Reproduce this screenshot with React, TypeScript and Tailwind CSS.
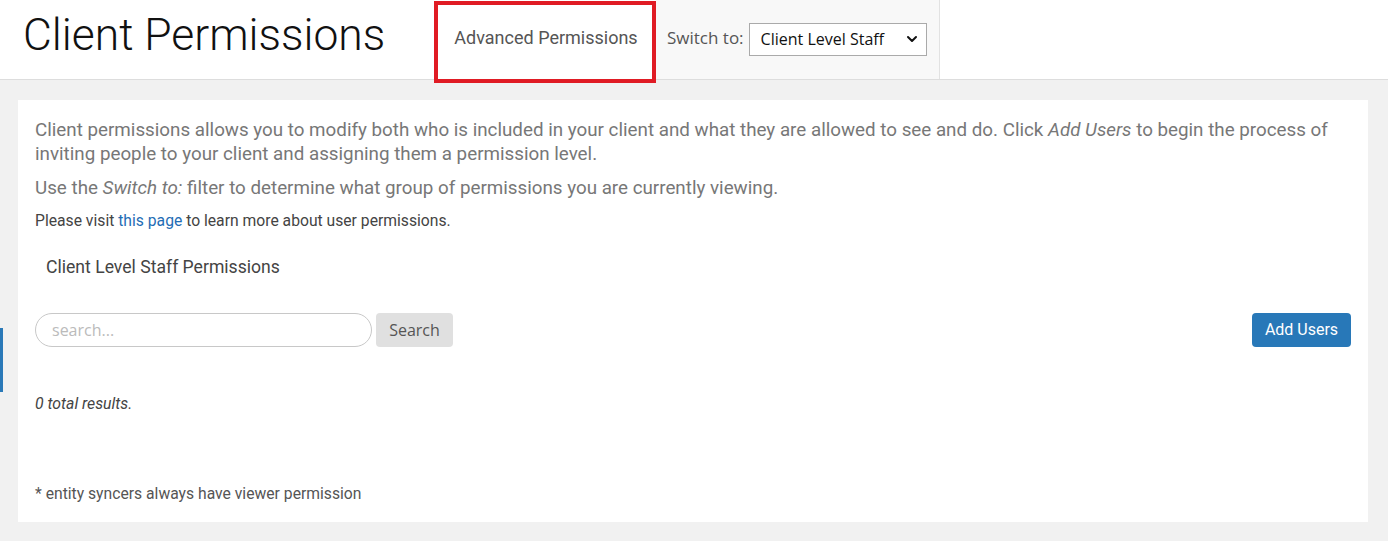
import React from "react";

export default function App() {
  return (
    <div className="w-[1388px] h-[541px] bg-[#f1f1f1] overflow-hidden relative" style={{ fontFamily: "Roboto, 'Liberation Sans', sans-serif" }}>
      {/* Header */}
      <div className="h-[80px] bg-white border-b border-[#dddddd] flex items-stretch">
        <div className="w-[434px] flex items-center pl-[23px]">
          <h1 className="text-[44.4px] font-light text-[#111] leading-none -mt-[8px]">Client Permissions</h1>
        </div>
        <div className="relative w-[222px] flex items-center justify-center bg-white">
          <span className="text-[18px] text-[#555] -mt-[4px] ml-[2px]">Advanced Permissions</span>
          <div className="absolute left-0 top-[1px] w-[222px] h-[82px] border-[4px] border-[#e01b24]" />
        </div>
        <div className="w-[284px] bg-[#f8f8f8] border-r border-[#e2e2e2] flex items-center pl-[11px] gap-[5px]">
          <span className="text-[17px] text-[#555] -mt-[4px]" style={{ fontFamily: "'Open Sans', sans-serif" }}>Switch to:</span>
          <div className="w-[178px] h-[33px] -mt-[1px] bg-white border border-[#aaaaaa] flex items-center justify-between pl-[11px] pr-[8px]">
            <span className="text-[16px] text-[#111]" style={{ fontFamily: "'Open Sans', sans-serif" }}>Client Level Staff</span>
            <svg width="12" height="12" viewBox="0 0 12 12" fill="none">
              <path d="M2 4l4 4 4-4" stroke="#111" strokeWidth="2" strokeLinecap="round" strokeLinejoin="round" />
            </svg>
          </div>
        </div>
        <div className="flex-1" />
      </div>

      {/* Left blue tab */}
      <div className="absolute left-0 top-[328px] w-[3px] h-[64px] bg-[#2a79b8]" />

      {/* Card */}
      <div className="ml-[18px] w-[1350px] mt-[20px] h-[422px] bg-white px-[17px] pt-[18px]">
        <p className="text-[18.8px] text-[#777] leading-[24px]">
          Client permissions allows you to modify both who is included in your client and what they are allowed to see and do. Click <i>Add Users</i> to begin the process of inviting people to your client and assigning them a permission level.
        </p>
        <p className="text-[18.8px] text-[#777] leading-[24px] mt-[10px]">
          Use the <i>Switch to:</i> filter to determine what group of permissions you are currently viewing.
        </p>
        <p className="text-[15.7px] text-[#444] leading-[20px] mt-[11px]">
          Please visit <a className="text-[#1f6db5]">this page</a> to learn more about user permissions.
        </p>
        <div className="text-[17.6px] text-[#444] mt-[24px] pl-[11px] leading-[24px]">Client Level Staff Permissions</div>

        <div className="flex items-center justify-between mt-[34px]">
          <div className="flex items-center gap-[4px]">
            <div className="w-[337px] h-[34px] rounded-full border border-[#c8c8c8] flex items-center pl-[16px]">
              <span className="text-[16px] text-[#bbb]" style={{ fontFamily: "'Open Sans', sans-serif" }}>search...</span>
            </div>
            <div className="w-[77px] h-[34px] rounded-[4px] bg-[#e0e0e0] flex items-center justify-center">
              <span className="text-[16px] text-[#555]" style={{ fontFamily: "'Open Sans', sans-serif" }}>Search</span>
            </div>
          </div>
          <div className="w-[99px] h-[34px] rounded-[4px] bg-[#2878b8] flex items-center justify-center">
            <span className="text-[16px] text-white">Add Users</span>
          </div>
        </div>

        <div className="text-[15.8px] italic text-[#444] mt-[47px] leading-[20px]">0 total results.</div>

        <div className="text-[15.7px] text-[#555] mt-[70px] leading-[20px]">* entity syncers always have viewer permission</div>
      </div>
    </div>
  );
}
